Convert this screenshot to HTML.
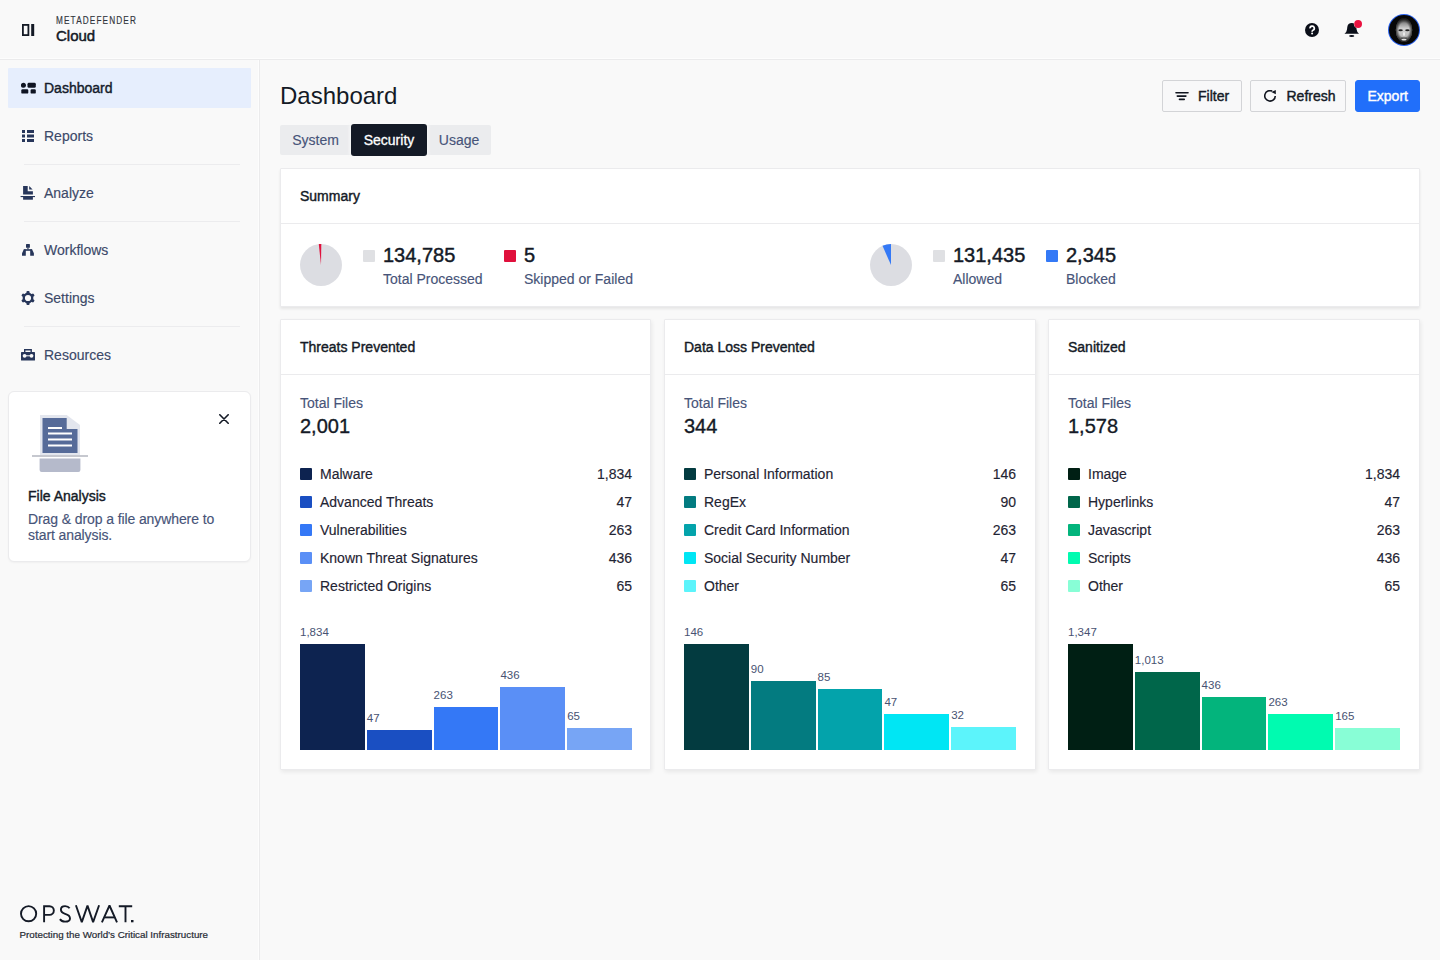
<!DOCTYPE html>
<html><head><meta charset="utf-8">
<style>
*{box-sizing:border-box;margin:0;padding:0}
html,body{width:1440px;height:960px;overflow:hidden}
body{font-family:"Liberation Sans",sans-serif;background:#f9f9f9;color:#141a26;position:relative}
.abs{position:absolute;white-space:nowrap}
#header{position:absolute;left:0;top:0;width:1440px;height:60px;border-bottom:1px solid #ebebec;background:#f9f9f9;box-shadow:inset 0 -1px 0 #fdfdfd}
#sidebar{position:absolute;left:0;top:60px;width:260px;height:900px;border-right:1px solid #ebebec;background:#f9f9f9;box-shadow:inset -1px 0 0 #fdfdfd}
.nav{position:absolute;left:8px;width:243px;height:40px;border-radius:1px}
.nav.active{background:#e6eefd}
.nav .lbl{position:absolute;left:36px;top:0;line-height:40px;font-size:14px;color:#3c4969;white-space:nowrap;-webkit-text-stroke:0.15px #3c4969}
.nav.active .lbl{color:#141b2b;-webkit-text-stroke:0.4px #141b2b}
.med{-webkit-text-stroke:0.4px currentColor}
.nav svg{position:absolute}
.divider{position:absolute;left:24px;width:216px;height:1px;background:#ececee}
.card{position:absolute;background:#fff;border:1px solid #ebebed;border-radius:1px;box-shadow:1px 2px 4px rgba(0,0,0,0.07)}
.ctitle{position:absolute;left:19px;top:0;height:54px;line-height:54px;font-size:14px;-webkit-text-stroke:0.4px #141a26;color:#141a26;white-space:nowrap}
.cdiv{position:absolute;left:0;right:0;top:54px;height:1px;background:#ebebed}
.btn{position:absolute;top:80px;height:32px;border:1px solid #d3d4d7;border-radius:2px;background:#f8f8f9;font-size:14px;color:#141a26}
.tab{position:absolute;top:124px;height:32px;line-height:32px;font-size:14px;color:#475479;text-align:center;-webkit-text-stroke:0.15px #475479}
.tf{position:absolute;font-size:14px;line-height:18px;color:#475479;white-space:nowrap;-webkit-text-stroke:0.15px #475479}
.tn{position:absolute;font-size:20px;line-height:24px;color:#141a26;white-space:nowrap;-webkit-text-stroke:0.35px #141a26}
.lsq{position:absolute;width:12px;height:12px;border-radius:1px}
.lname{position:absolute;font-size:14px;line-height:20px;color:#1f2433;white-space:nowrap;-webkit-text-stroke:0.15px #1f2433}
.lval{position:absolute;font-size:14px;line-height:20px;color:#1f2433;text-align:right;white-space:nowrap;-webkit-text-stroke:0.15px #1f2433}
.bar{position:absolute;width:64.8px}
.blab{position:absolute;font-size:11.5px;line-height:14px;color:#475272;white-space:nowrap}
.snum{position:absolute;font-size:20px;line-height:24px;color:#141a26;white-space:nowrap;-webkit-text-stroke:0.45px #141a26}
.slab{position:absolute;font-size:14px;line-height:18px;color:#475479;white-space:nowrap;-webkit-text-stroke:0.15px #475479}
</style></head>
<body>
<div id="header">
  <svg class="abs" style="left:22px;top:24px" width="13" height="12" viewBox="0 0 13 12"><rect x="0.9" y="0.9" width="5.5" height="10.2" fill="none" stroke="#141a26" stroke-width="1.8"/><rect x="9.2" y="0" width="3" height="12" fill="#141a26"/></svg>
  <div class="abs" style="left:56px;top:15px;font-size:10px;letter-spacing:1.4px;color:#30343c;transform:scaleX(0.82);transform-origin:0 0;-webkit-text-stroke:0.15px #30343c">METADEFENDER</div>
  <div class="abs" style="left:56px;top:26.5px;font-size:15px;color:#141a26;-webkit-text-stroke:0.5px #141a26">Cloud</div>
  <!-- help -->
  <svg class="abs" style="left:1305px;top:23px" width="14" height="14" viewBox="0 0 14 14"><circle cx="7" cy="7" r="7" fill="#0b0f19"/><path d="M5.1 5.4 A2.1 2.1 0 1 1 7.9 7.2 Q7.1 7.6 7.1 8.7" fill="none" stroke="#fff" stroke-width="1.7"/><circle cx="7.1" cy="10.6" r="1" fill="#fff"/></svg>
  <!-- bell -->
  <svg class="abs" style="left:1344px;top:19px" width="20" height="20" viewBox="0 0 20 20"><path d="M0.5 14.7 Q2.6 13.6 3 10.5 L3.3 8 Q3.8 4 7.8 4 Q11.8 4 12.3 8 L12.6 10.5 Q13 13.6 15 14.7 Z" fill="#0b0f19"/><ellipse cx="7.7" cy="17.1" rx="2.6" ry="1" fill="#0b0f19"/><circle cx="14.1" cy="5" r="4.3" fill="#f9f9f9"/><circle cx="14.1" cy="5" r="3.9" fill="#ea1240"/></svg>
  <!-- avatar -->
  <svg class="abs" style="left:1388px;top:14px" width="32" height="32" viewBox="0 0 32 32">
    <defs><linearGradient id="fg" x1="0" y1="0" x2="0" y2="1"><stop offset="0" stop-color="#3a3a3a"/><stop offset="0.25" stop-color="#9a9a9a"/><stop offset="0.45" stop-color="#d2d2d2"/><stop offset="0.75" stop-color="#bdbdbd"/><stop offset="1" stop-color="#6a6a6a"/></linearGradient>
    <radialGradient id="sh" cx="50%" cy="50%" r="50%"><stop offset="0.6" stop-color="#000" stop-opacity="0"/><stop offset="1" stop-color="#000" stop-opacity="0.75"/></radialGradient></defs>
    <circle cx="16" cy="16" r="16" fill="#2a62ee"/>
    <circle cx="16" cy="16" r="15" fill="#070707"/>
    <ellipse cx="16" cy="16" rx="8.2" ry="12" fill="url(#fg)"/>
    <ellipse cx="16" cy="16" rx="8.2" ry="12" fill="url(#sh)"/>
    <ellipse cx="12.6" cy="16.3" rx="2.2" ry="1" fill="#222"/>
    <ellipse cx="19.4" cy="16.3" rx="2.2" ry="1" fill="#222"/>
    <ellipse cx="16" cy="20" rx="1.1" ry="2" fill="#eaeaea"/>
    <rect x="13.2" y="23.6" width="5.6" height="1" fill="#3a3a3a"/>
    <ellipse cx="16" cy="25.6" rx="2.6" ry="0.9" fill="#e0e0e0"/>
  </svg>
</div>
<div id="sidebar"></div>
<div class="nav active" style="top:68px">
  <svg style="left:13px;top:14px" width="15" height="12" viewBox="0 0 15 12"><g fill="#0f1422"><circle cx="2.4" cy="3.3" r="2.5"/><rect x="6.5" y="0.8" width="8.3" height="5" rx="1.4"/><rect x="0.3" y="7.3" width="7" height="4.3" rx="1.2"/><rect x="9.6" y="7.3" width="5.2" height="4.3" rx="1.2"/></g></svg>
  <span class="lbl">Dashboard</span></div>
<div class="nav" style="top:116px">
  <svg style="left:14px;top:14px" width="12" height="12" viewBox="0 0 12 12"><g fill="#27365a"><rect x="0" y="0" width="3" height="3"/><rect x="5" y="0" width="7" height="3"/><rect x="0" y="4.5" width="3" height="3"/><rect x="5" y="4.5" width="7" height="3"/><rect x="0" y="9" width="3" height="3"/><rect x="5" y="9" width="7" height="3"/></g></svg>
  <span class="lbl">Reports</span></div>
<div class="divider" style="top:164px"></div>
<div class="nav" style="top:173px">
  <svg style="left:12px;top:12px" width="16" height="16" viewBox="0 0 16 16"><g fill="#27365a"><path d="M3.1 1.1 H7.7 V6.2 H12.9 V9.6 H3.1 Z"/><path d="M9.2 1.1 L12.6 4.6 H9.2 Z"/><rect x="0.6" y="11" width="14.4" height="1.1"/><rect x="3.1" y="12" width="9.8" height="2.7"/></g></svg>
  <span class="lbl">Analyze</span></div>
<div class="divider" style="top:221px"></div>
<div class="nav" style="top:230px">
  <svg style="left:13px;top:13px" width="14" height="14" viewBox="0 0 14 14"><g fill="#27365a"><rect x="5" y="1" width="3.9" height="3.7" rx="0.5"/><rect x="6.35" y="4.5" width="1.2" height="2"/><rect x="2.8" y="6.2" width="8.3" height="1.6"/><path d="M1 12.8 V10.2 L2.8 6.6 H4.8 V12.8 Z"/><path d="M12.9 12.8 V10.2 L11.1 6.6 H9.2 V12.8 Z"/></g></svg>
  <span class="lbl">Workflows</span></div>
<div class="nav" style="top:278px">
  <svg style="left:12px;top:11.75px" width="16" height="16" viewBox="0 0 16 16"><g transform="translate(8,8)" fill="#27365a"><circle r="4.25" fill="none" stroke="#27365a" stroke-width="2.3"/><rect x="-1.55" y="-6.9" width="3.1" height="3.4" rx="0.9" transform="rotate(0)"/><rect x="-1.55" y="-6.9" width="3.1" height="3.4" rx="0.9" transform="rotate(60)"/><rect x="-1.55" y="-6.9" width="3.1" height="3.4" rx="0.9" transform="rotate(120)"/><rect x="-1.55" y="-6.9" width="3.1" height="3.4" rx="0.9" transform="rotate(180)"/><rect x="-1.55" y="-6.9" width="3.1" height="3.4" rx="0.9" transform="rotate(240)"/><rect x="-1.55" y="-6.9" width="3.1" height="3.4" rx="0.9" transform="rotate(300)"/></g></svg>
  <span class="lbl">Settings</span></div>
<div class="divider" style="top:326px"></div>
<div class="nav" style="top:335px">
  <svg style="left:13px;top:14px" width="14" height="12" viewBox="0 0 14 12"><g fill="#27365a"><path d="M3 0 H10.9 V3.2 H9.5 V1.4 H4.4 V3.2 H3 Z"/><rect x="0" y="3" width="14" height="8.6" rx="0.6"/></g><rect x="3.5" y="6.3" width="7" height="1" fill="#f9f9f9"/><circle cx="3.6" cy="6.8" r="1.9" fill="#f9f9f9"/><circle cx="10.5" cy="6.8" r="1.9" fill="#f9f9f9"/></svg>
  <span class="lbl">Resources</span></div>

<!-- file analysis card -->
<div class="abs" style="left:8px;top:391px;width:243px;height:171px;background:#fff;border:1px solid #ebebed;border-radius:6px;box-shadow:0 1px 2px rgba(0,0,0,0.04)"></div>
<svg class="abs" style="left:30px;top:412px" width="62" height="64" viewBox="0 0 62 64">
  <path d="M10 3 L36.7 3 L50 13 L50 44 L10 44 Z" fill="#e3e6ee"/>
  <path d="M12.5 6 L36.7 6 L36.7 17 L47.5 17 L47.5 41 L12.5 41 Z" fill="#566b99"/>
  <rect x="18" y="15" width="14" height="2" fill="#fff"/>
  <rect x="18" y="20.5" width="24" height="2" fill="#fff"/>
  <rect x="18" y="26.5" width="24" height="2" fill="#fff"/>
  <rect x="18" y="32.5" width="24" height="2" fill="#fff"/>
  <rect x="2" y="43" width="56" height="2" fill="#c6c8cf"/>
  <path d="M9.6 46.5 L50.4 46.5 L50.4 58 Q50.4 60 48.4 60 L11.6 60 Q9.6 60 9.6 58 Z" fill="#b5bacb"/>
</svg>
<svg class="abs" style="left:219px;top:414px" width="10" height="10" viewBox="0 0 10 10"><path d="M0.8 0.8 L9.2 9.2 M9.2 0.8 L0.8 9.2" stroke="#141a26" stroke-width="1.6" stroke-linecap="round"/></svg>
<div class="abs med" style="left:28px;top:488px;font-size:14px;color:#141a26">File Analysis</div>
<div class="abs" style="left:28px;top:511px;font-size:14px;line-height:16px;color:#475479;white-space:normal;width:210px;letter-spacing:-0.1px;-webkit-text-stroke:0.15px #475479">Drag &amp; drop a file anywhere to start analysis.</div>

<!-- opswat -->
<svg class="abs" style="left:15px;top:898px" width="125" height="30" viewBox="0 0 125 30"><g fill="none" stroke="#141a26" stroke-width="1.9" stroke-miterlimit="1.6">
<circle cx="13.6" cy="15.7" r="7.6"/>
<path d="M29.1 24.3 V8.2 H34.5 A4.35 4.35 0 0 1 34.5 16.9 H29.1"/>
<path d="M54.6 10.2 Q53.2 8.1 50.1 8.1 Q45.9 8.1 45.9 11.6 Q45.9 14.6 50.1 15.8 Q55 17.1 55 20.4 Q55 23.6 50 23.6 Q46.6 23.6 44.9 21.1"/>
<path d="M60.9 7.3 L66.8 24.1 L72.5 7.6 L78.1 24.1 L84.1 7.3" stroke-linejoin="miter"/>
<path d="M86.9 24.3 L94.5 7.5 L102 24.3"/>
<path d="M89.6 19.4 H99.6"/>
<path d="M103.8 8.2 H117.2 M110.5 8.2 V24.3"/>
</g><rect x="116" y="22" width="2.5" height="2.3" fill="#141a26"/></svg>
<div class="abs" style="left:19.5px;top:929px;font-size:9.8px;color:#262a33;-webkit-text-stroke:0.2px #262a33">Protecting the World’s Critical Infrastructure</div>

<!-- main -->
<div class="abs" style="left:280px;top:82px;font-size:24px;color:#141a26">Dashboard</div>
<div class="abs" style="left:280px;top:125px;width:211px;height:30px;background:#ebecee;border-radius:2px"></div>
<div class="abs" style="left:351px;top:124px;width:76px;height:32px;background:#141a26;border-radius:3px;box-shadow:0 0 3px 2px rgba(250,250,250,0.7)"></div>
<div class="tab" style="left:280px;width:71px">System</div>
<div class="tab" style="left:351px;width:76px;color:#fff;-webkit-text-stroke:0.3px #fff">Security</div>
<div class="tab" style="left:427px;width:64px">Usage</div>

<div class="btn" style="left:1162px;width:80px">
  <svg class="abs" style="left:12px;top:10px" width="15" height="11" viewBox="0 0 15 11"><g fill="#11151f"><rect x="0.2" y="0.9" width="13.6" height="1.6" rx="0.8"/><rect x="1.5" y="4.3" width="10.2" height="1.6" rx="0.8"/><rect x="3.7" y="7.6" width="6.3" height="1.6" rx="0.8"/></g></svg>
  <span class="abs med" style="left:35px;top:7px">Filter</span>
</div>
<div class="btn" style="left:1250px;width:96px">
  <svg class="abs" style="left:13px;top:9px" width="13" height="13" viewBox="0 0 13 13"><path d="M11.25 5.9 A5.25 5.25 0 1 1 8.2 1.1" fill="none" stroke="#11151f" stroke-width="1.6"/><path d="M7.3 1.9 L11.8 0 L11.8 4.3 Z" fill="#11151f"/></svg>
  <span class="abs med" style="left:35.5px;top:7px">Refresh</span>
</div>
<div class="btn" style="left:1355px;width:65px;background:#216ffa;border-color:#216ffa;color:#fff;border-radius:3px">
  <span class="abs med" style="left:11.5px;top:7px">Export</span>
</div>

<!-- summary -->
<div class="card" style="left:280px;top:168px;width:1140px;height:139px;box-shadow:0 2px 3px rgba(0,0,0,0.08)">
  <div class="ctitle">Summary</div><div class="cdiv"></div>
</div>
<svg class="abs" style="left:300px;top:244px" width="42" height="42" viewBox="-21 -21 42 42"><circle r="21" fill="#dcdde2"/><path d="M0 0 L-2.2 -20.9 A21 21 0 0 1 0.3 -21 Z" fill="#e0103c"/></svg>
<div class="lsq" style="left:363px;top:250px;background:#dfe0e3"></div>
<div class="snum" style="left:383px;top:243px">134,785</div>
<div class="slab" style="left:383px;top:270px">Total Processed</div>
<div class="lsq" style="left:504px;top:250px;background:#e0103c"></div>
<div class="snum" style="left:524px;top:243px">5</div>
<div class="slab" style="left:524px;top:270px">Skipped or Failed</div>

<svg class="abs" style="left:870px;top:244px" width="42" height="42" viewBox="-21 -21 42 42"><circle r="21" fill="#dcdde2"/><path d="M0 0 L-8.5 -19.2 A21 21 0 0 1 0 -21 Z" fill="#3479f6"/></svg>
<div class="lsq" style="left:933px;top:250px;background:#dfe0e3"></div>
<div class="snum" style="left:953px;top:243px">131,435</div>
<div class="slab" style="left:953px;top:270px">Allowed</div>
<div class="lsq" style="left:1046px;top:250px;background:#3479f6"></div>
<div class="snum" style="left:1066px;top:243px">2,345</div>
<div class="slab" style="left:1066px;top:270px">Blocked</div>

<div class="card" style="left:280px;top:319px;width:371px;height:451px"><div class="ctitle">Threats Prevented</div><div class="cdiv"></div></div>
<div class="tf" style="left:300px;top:394px">Total Files</div>
<div class="tn" style="left:300px;top:414px">2,001</div>
<div class="lsq" style="left:300px;top:468px;background:#0d2350"></div>
<div class="lname" style="left:320px;top:464px">Malware</div>
<div class="lval" style="left:300px;width:332px;top:464px">1,834</div>
<div class="lsq" style="left:300px;top:496px;background:#1a4fc2"></div>
<div class="lname" style="left:320px;top:492px">Advanced Threats</div>
<div class="lval" style="left:300px;width:332px;top:492px">47</div>
<div class="lsq" style="left:300px;top:524px;background:#3478f6"></div>
<div class="lname" style="left:320px;top:520px">Vulnerabilities</div>
<div class="lval" style="left:300px;width:332px;top:520px">263</div>
<div class="lsq" style="left:300px;top:552px;background:#5a8ff6"></div>
<div class="lname" style="left:320px;top:548px">Known Threat Signatures</div>
<div class="lval" style="left:300px;width:332px;top:548px">436</div>
<div class="lsq" style="left:300px;top:580px;background:#77a5f5"></div>
<div class="lname" style="left:320px;top:576px">Restricted Origins</div>
<div class="lval" style="left:300px;width:332px;top:576px">65</div>
<div class="bar" style="left:300.0px;top:644px;height:106px;background:#0d2350"></div>
<div class="blab" style="left:300.0px;top:625px">1,834</div>
<div class="bar" style="left:366.8px;top:730px;height:20px;background:#1a4fc2"></div>
<div class="blab" style="left:366.8px;top:711px">47</div>
<div class="bar" style="left:433.6px;top:707px;height:43px;background:#3478f6"></div>
<div class="blab" style="left:433.6px;top:688px">263</div>
<div class="bar" style="left:500.4px;top:687px;height:63px;background:#5a8ff6"></div>
<div class="blab" style="left:500.4px;top:668px">436</div>
<div class="bar" style="left:567.2px;top:728px;height:22px;background:#77a5f5"></div>
<div class="blab" style="left:567.2px;top:709px">65</div>
<div class="card" style="left:664px;top:319px;width:372px;height:451px"><div class="ctitle">Data Loss Prevented</div><div class="cdiv"></div></div>
<div class="tf" style="left:684px;top:394px">Total Files</div>
<div class="tn" style="left:684px;top:414px">344</div>
<div class="lsq" style="left:684px;top:468px;background:#033b40"></div>
<div class="lname" style="left:704px;top:464px">Personal Information</div>
<div class="lval" style="left:684px;width:332px;top:464px">146</div>
<div class="lsq" style="left:684px;top:496px;background:#037b80"></div>
<div class="lname" style="left:704px;top:492px">RegEx</div>
<div class="lval" style="left:684px;width:332px;top:492px">90</div>
<div class="lsq" style="left:684px;top:524px;background:#03a3ab"></div>
<div class="lname" style="left:704px;top:520px">Credit Card Information</div>
<div class="lval" style="left:684px;width:332px;top:520px">263</div>
<div class="lsq" style="left:684px;top:552px;background:#00e6f4"></div>
<div class="lname" style="left:704px;top:548px">Social Security Number</div>
<div class="lval" style="left:684px;width:332px;top:548px">47</div>
<div class="lsq" style="left:684px;top:580px;background:#5cf4fb"></div>
<div class="lname" style="left:704px;top:576px">Other</div>
<div class="lval" style="left:684px;width:332px;top:576px">65</div>
<div class="bar" style="left:684.0px;top:644px;height:106px;background:#033b40"></div>
<div class="blab" style="left:684.0px;top:625px">146</div>
<div class="bar" style="left:750.8px;top:681px;height:69px;background:#037b80"></div>
<div class="blab" style="left:750.8px;top:662px">90</div>
<div class="bar" style="left:817.6px;top:689px;height:61px;background:#03a3ab"></div>
<div class="blab" style="left:817.6px;top:670px">85</div>
<div class="bar" style="left:884.4px;top:714px;height:36px;background:#00e6f4"></div>
<div class="blab" style="left:884.4px;top:695px">47</div>
<div class="bar" style="left:951.2px;top:727px;height:23px;background:#5cf4fb"></div>
<div class="blab" style="left:951.2px;top:708px">32</div>
<div class="card" style="left:1048px;top:319px;width:372px;height:451px"><div class="ctitle">Sanitized</div><div class="cdiv"></div></div>
<div class="tf" style="left:1068px;top:394px">Total Files</div>
<div class="tn" style="left:1068px;top:414px">1,578</div>
<div class="lsq" style="left:1068px;top:468px;background:#001f14"></div>
<div class="lname" style="left:1088px;top:464px">Image</div>
<div class="lval" style="left:1068px;width:332px;top:464px">1,834</div>
<div class="lsq" style="left:1068px;top:496px;background:#00664a"></div>
<div class="lname" style="left:1088px;top:492px">Hyperlinks</div>
<div class="lval" style="left:1068px;width:332px;top:492px">47</div>
<div class="lsq" style="left:1068px;top:524px;background:#03b47c"></div>
<div class="lname" style="left:1088px;top:520px">Javascript</div>
<div class="lval" style="left:1068px;width:332px;top:520px">263</div>
<div class="lsq" style="left:1068px;top:552px;background:#00fbb0"></div>
<div class="lname" style="left:1088px;top:548px">Scripts</div>
<div class="lval" style="left:1068px;width:332px;top:548px">436</div>
<div class="lsq" style="left:1068px;top:580px;background:#88fed6"></div>
<div class="lname" style="left:1088px;top:576px">Other</div>
<div class="lval" style="left:1068px;width:332px;top:576px">65</div>
<div class="bar" style="left:1068.0px;top:644px;height:106px;background:#001f14"></div>
<div class="blab" style="left:1068.0px;top:625px">1,347</div>
<div class="bar" style="left:1134.8px;top:672px;height:78px;background:#00664a"></div>
<div class="blab" style="left:1134.8px;top:653px">1,013</div>
<div class="bar" style="left:1201.6px;top:697px;height:53px;background:#03b47c"></div>
<div class="blab" style="left:1201.6px;top:678px">436</div>
<div class="bar" style="left:1268.4px;top:714px;height:36px;background:#00fbb0"></div>
<div class="blab" style="left:1268.4px;top:695px">263</div>
<div class="bar" style="left:1335.2px;top:728px;height:22px;background:#88fed6"></div>
<div class="blab" style="left:1335.2px;top:709px">165</div></body></html>
